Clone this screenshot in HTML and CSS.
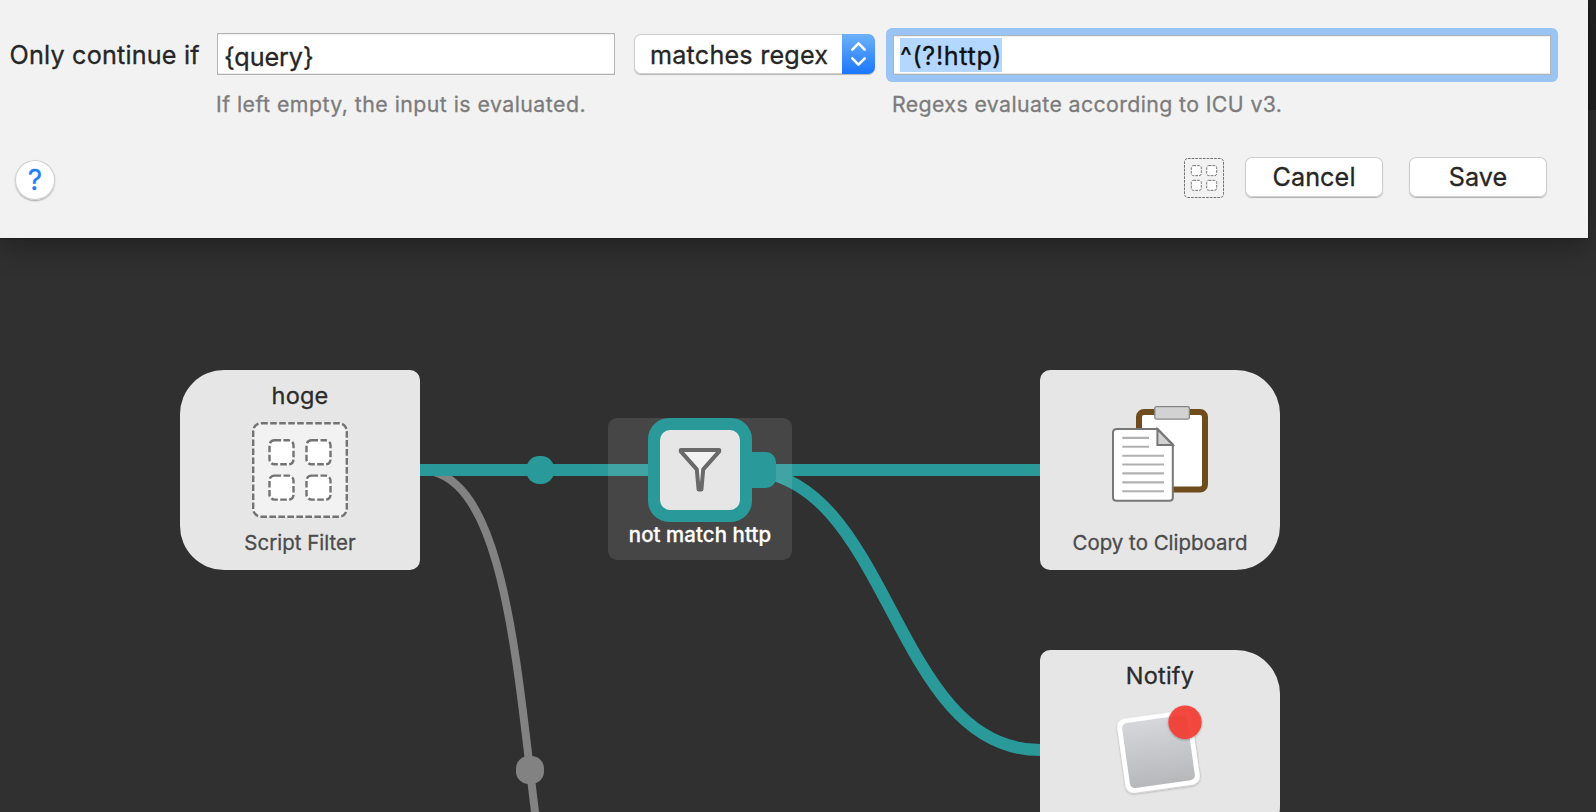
FILE: index.html
```
<!DOCTYPE html>
<html lang="en">
<head>
<meta charset="utf-8">
<title>Workflow editor</title>
<link rel="stylesheet" href="styles.css">
</head>
<body>
<svg class="defs" aria-hidden="true">
  <symbol id="grid-icon" viewBox="0 0 96 96">
    <g stroke="#737373" stroke-width="2.4" stroke-dasharray="6.6 2.4">
      <rect x="1.2" y="1.2" width="93.6" height="93.6" rx="8" fill="#f2f2f2"/>
      <g fill="#fff">
        <rect x="17.5" y="18.3" width="24" height="24" rx="5"/>
        <rect x="54.5" y="18.3" width="24" height="24" rx="5"/>
        <rect x="17.5" y="53.6" width="24" height="24" rx="5"/>
        <rect x="54.5" y="53.6" width="24" height="24" rx="5"/>
      </g>
    </g>
  </symbol>
</svg>

<main class="canvas">
  <div class="toolbar-edge"></div>

  <svg class="links" width="1596" height="812" viewBox="0 0 1596 812" fill="none">
    <path d="M420 470 C570 470 490 1070 640 1070" stroke="#828282" stroke-width="8"/>
    <rect x="516" y="756" width="28" height="28" rx="12.5" fill="#828282"/>
    <path d="M420 470 H1040" stroke="#299999" stroke-width="12"/>
    <rect x="526.5" y="456" width="27.5" height="28" rx="12.5" fill="#299999"/>
    <path d="M742 470 C892 470 890 750 1040 750" stroke="#299999" stroke-width="12"/>
  </svg>

  <section class="node node-input">
    <h2 class="node-title">hoge</h2>
    <svg class="node-icon" width="96" height="96"><use href="#grid-icon"/></svg>
    <p class="node-type">Script Filter</p>
  </section>

  <section class="utility">
    <div class="utility-frame">
      <svg width="80" height="80" viewBox="660 430 80 80">
        <path d="M680.8 450 H719.2 V451.4 L703.2 469.4 L701.4 489.6 H698.6 L696.8 469.4 L680.8 451.4 Z" fill="#f2f2f2" stroke="#696969" stroke-width="4" stroke-linejoin="round"/>
      </svg>
      <span class="utility-port"></span>
    </div>
    <p class="utility-label">not match http</p>
  </section>

  <section class="node node-output node-clipboard">
    <h2 class="node-title"></h2>
    <svg class="node-icon node-icon-raised" width="96" height="96" viewBox="0 0 96 96">
      <rect x="27" y="6" width="66" height="77.6" rx="5" fill="#fff" stroke="#6f4c1d" stroke-width="6"/>
      <rect x="42.8" y=".7" width="34.6" height="12.4" rx="1.5" fill="#d2d2d2" stroke="#858585" stroke-width="1.3"/>
      <path d="M5 23 H45.6 L60.8 38.4 V91.5 Q60.8 94.8 57.5 94.8 H4.5 Q1 94.8 1 91.3 V26.5 Q1 23 5 23 Z" fill="#fff" stroke="#777" stroke-width="2"/>
      <path d="M45.4 23 V39 H60.8 Z" fill="#d2d2d2" stroke="#777" stroke-width="2"/>
      <path d="M10.3 31.9 H37 M10.3 40.8 H37 M10.3 49.7 H52 M10.3 58.5 H52 M10.3 67.4 H52 M10.3 76.4 H52 M10.3 85.2 H52" stroke="#b1b1b1" stroke-width="2.1"/>
    </svg>
    <p class="node-type">Copy to Clipboard</p>
  </section>

  <section class="node node-output node-notify">
    <h2 class="node-title">Notify</h2>
    <svg class="node-icon" width="96" height="96" viewBox="1112 702 96 96">
      <defs>
        <linearGradient id="tile" x1="0" y1="0" x2="0" y2="1">
          <stop offset="0" stop-color="#d6d7db"/>
          <stop offset="1" stop-color="#b7b8ba"/>
        </linearGradient>
        <filter id="soft" x="-20%" y="-20%" width="140%" height="140%">
          <feDropShadow dx="0" dy="1" stdDeviation="1" flood-opacity=".35"/>
        </filter>
      </defs>
      <g transform="rotate(-8 1158.5 751.7)">
        <rect x="1121" y="714.2" width="75" height="75" rx="8" fill="#fff" filter="url(#soft)"/>
        <rect x="1125.7" y="718.9" width="65.6" height="65.6" rx="5" fill="url(#tile)"/>
      </g>
      <circle cx="1185" cy="722.2" r="16.7" fill="#f7392e" fill-opacity=".87" filter="url(#soft)"/>
    </svg>
  </section>
</main>

<form class="dialog">
  <div class="fields">
    <label class="field-label">Only continue if</label>
    <div class="query-field">
      <div class="input">{query}</div>
      <p class="hint hint-query">If left empty, the input is evaluated.</p>
    </div>
    <div class="select">
      <span class="select-value">matches regex</span>
      <span class="select-arrows">
        <svg width="33" height="40" viewBox="0 0 33 40" fill="none" stroke="#fff" stroke-width="2.6" stroke-linecap="round" stroke-linejoin="round">
          <path d="M10.3 15.6 L16.5 9.4 L22.7 15.6 M10.3 24.4 L16.5 30.6 L22.7 24.4"/>
        </svg>
      </span>
    </div>
    <div class="regex-field">
      <div class="focus-ring">
        <div class="input input-focused"><span class="selection">^(?!http)</span></div>
      </div>
      <p class="hint hint-regex">Regexs evaluate according to ICU v3.</p>
    </div>
  </div>
  <div class="actions">
    <button type="button" class="help" aria-label="Help">?</button>
    <svg class="grid-button" width="40" height="40"><use href="#grid-icon"/></svg>
    <button type="button" class="button">Cancel</button>
    <button type="button" class="button button-save">Save</button>
  </div>
</form>
</body>
</html>
```
FILE: styles.css
```
* { box-sizing: border-box; }

body {
  position: relative;
  width: 1596px;
  height: 812px;
  margin: 0;
  overflow: hidden;
  background: #303030;
  color: #262626;
  font-family: Inter, Roboto, "Liberation Sans", sans-serif;
  -webkit-text-stroke: .3px currentColor;
}

h2, p { margin: 0; font-weight: 400; }
.defs { position: absolute; width: 0; height: 0; }

/* Workflow canvas */
.canvas { position: absolute; inset: 0; overflow: hidden; }
.toolbar-edge { height: 110px; background: #222; }
.links { position: absolute; left: 0; top: 0; }

.node {
  position: absolute;
  display: flex;
  flex-direction: column;
  align-items: center;
  width: 240px;
  height: 200px;
  padding-top: 12px;
  background: #e6e6e6;
}
.node-input { left: 180px; top: 370px; border-radius: 44px 10px 10px 44px; }
.node-output { left: 1040px; border-radius: 10px 44px 44px 10px; }
.node-clipboard { top: 370px; }
.node-notify { top: 650px; }
.node-title {
  height: 28px;
  font-size: 23.5px;
  line-height: 28px;
  letter-spacing: .2px;
  color: #2b2b2b;
}
.node-icon { margin-top: 12px; flex: none; }
.node-icon-raised { margin-top: -4px; margin-bottom: 16px; }
.node-type {
  margin-top: 12px;
  font-size: 20.4px;
  line-height: 26px;
  letter-spacing: .04px;
  color: #4b4b4b;
}

.utility {
  position: absolute;
  left: 608px;
  top: 418px;
  display: flex;
  flex-direction: column;
  align-items: center;
  width: 184px;
  height: 142px;
  border-radius: 9px;
  background: rgba(255, 255, 255, .11);
}
.utility-frame {
  position: relative;
  width: 104px;
  height: 104px;
  border: 12px solid #299999;
  border-radius: 21px;
  background: #299999;
}
.utility-frame svg { display: block; border-radius: 10px; background: #e6e6e6; }
.utility-port {
  position: absolute;
  left: 86px;
  top: 22px;
  width: 30px;
  height: 36px;
  border-radius: 0 10px 10px 0;
  background: #299999;
}
.utility-label {
  font-size: 20.4px;
  font-weight: 500;
  line-height: 26px;
  letter-spacing: .1px;
  color: #fff;
}

/* Filter dialog */
.dialog {
  position: relative;
  width: 1588px;
  height: 238px;
  padding: 28px 0 0;
  background: #f2f2f2;
  box-shadow: 0 0 2px rgba(0, 0, 0, .6), 0 8px 28px rgba(0, 0, 0, .32);
}
.fields { display: flex; align-items: flex-start; height: 129px; }
.field-label {
  width: 217px;
  padding: 13px 0 0 9.5px;
  font-size: 25.2px;
  line-height: 28px;
  letter-spacing: .19px;
  white-space: nowrap;
}
.query-field { width: 398px; padding-top: 5px; }
.input {
  height: 42px;
  padding: 9px 0 0 6px;
  border: 1px solid #b3b3b3;
  background: #fff;
  box-shadow: inset 0 -1px #e8e8e8, inset 0 1px #f0f0f0;
  font-size: 25.2px;
  line-height: 28px;
  letter-spacing: -.1px;
}
.hint {
  font-size: 21.3px;
  line-height: 26px;
  color: #7c7c7c;
  white-space: nowrap;
}
.hint-query { margin: 16px 0 0 -1px; letter-spacing: .46px; }
.hint-regex { margin: 9px 0 0 6px; letter-spacing: .39px; }

.select {
  display: flex;
  width: 241px;
  height: 40px;
  margin: 6px 11px 0 19px;
  overflow: hidden;
  border-radius: 7px;
  background: #fff;
  box-shadow: inset 0 0 0 1px #cfcfcf, 0 1px 1px #b4b4b4;
}
.select-value {
  width: 208px;
  padding: 7px 0 0 16px;
  font-size: 25.2px;
  line-height: 28px;
  letter-spacing: .2px;
}
.select-arrows { height: 40px; background: linear-gradient(#6db1f8, #1a76fd); }

.regex-field { width: 672px; }
.focus-ring { height: 54px; padding: 7px; border-radius: 6px; background: #9ac4f4; }
.input-focused { height: 40px; padding: 2px 0 0 6px; border-color: #aeb4bb; }
.selection {
  display: inline-block;
  width: 102px;
  height: 34px;
  padding: 4px 0 0;
  background: #b3d7ff;
  color: #111;
  letter-spacing: .65px;
}

.actions { display: flex; align-items: flex-start; padding: 0 41px 0 15px; }
.help {
  width: 40px;
  height: 40px;
  margin: 3px auto 0 0;
  padding: 0;
  border: 0;
  border-radius: 50%;
  background: #fff;
  box-shadow: inset 0 0 0 1px #cfcfcf, 0 1px 1.5px #a8a8a8;
  color: #1f7dfb;
  font: 400 28px/41px Inter, sans-serif;
}
.grid-button { margin: 1px 21px 0 0; }
.button {
  width: 138px;
  height: 40px;
  padding: 1px 0 0;
  border: 0;
  border-radius: 7px;
  background: #fff;
  box-shadow: inset 0 0 0 1px #cfcfcf, 0 1px 1px #b4b4b4;
  color: #262626;
  font: 25.2px/39px Inter, sans-serif;
  letter-spacing: .1px;
}
.button-save { margin-left: 26px; }
```
